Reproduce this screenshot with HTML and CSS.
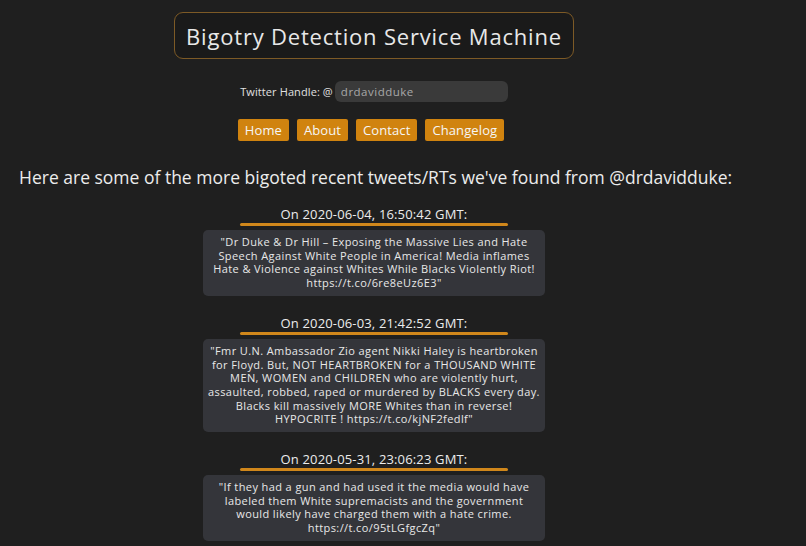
FILE: index.html
```html
<!DOCTYPE html>
<html lang="en">
<head>
<meta charset="utf-8">
<title>Bigotry Detection Service Machine</title>
<link rel="stylesheet" href="styles.css">
</head>
<body>
<div class="page">
  <header class="title-box">
    <h1 class="title">Bigotry Detection Service Machine</h1>
  </header>

  <form class="handle-form">
    <label class="handle-label" for="handle">Twitter Handle: @</label>
    <input class="handle-input" id="handle" type="text" value="drdavidduke">
  </form>

  <nav class="nav">
    <a class="nav-btn" href="#">Home</a>
    <a class="nav-btn" href="#">About</a>
    <a class="nav-btn" href="#">Contact</a>
    <a class="nav-btn" href="#">Changelog</a>
  </nav>

  <h2 class="intro">Here are some of the more bigoted recent tweets/RTs we've found from @drdavidduke:</h2>

  <section class="tweets">
    <article class="tweet">
      <div class="tweet-date">On 2020-06-04, 16:50:42 GMT:</div>
      <div class="tweet-rule"></div>
      <p class="tweet-body">"Dr Duke &amp; Dr Hill – Exposing the Massive Lies and Hate<br>Speech Against White People in America! Media inflames<br>Hate &amp; Violence against Whites While Blacks Violently Riot!<br>https://t.co/6re8eUz6E3"</p>
    </article>
    <article class="tweet">
      <div class="tweet-date">On 2020-06-03, 21:42:52 GMT:</div>
      <div class="tweet-rule"></div>
      <p class="tweet-body">"Fmr U.N. Ambassador Zio agent Nikki Haley is heartbroken<br>for Floyd. But, NOT HEARTBROKEN for a THOUSAND WHITE<br>MEN, WOMEN and CHILDREN who are violently hurt,<br>assaulted, robbed, raped or murdered by BLACKS every day.<br>Blacks kill massively MORE Whites than in reverse!<br>HYPOCRITE ! https://t.co/kjNF2fedlf"</p>
    </article>
    <article class="tweet">
      <div class="tweet-date">On 2020-05-31, 23:06:23 GMT:</div>
      <div class="tweet-rule"></div>
      <p class="tweet-body">"If they had a gun and had used it the media would have<br>labeled them White supremacists and the government<br>would likely have charged them with a hate crime.<br>https://t.co/95tLGfgcZq"</p>
    </article>
  </section>
</div>
</body>
</html>
```

FILE: styles.css
```css
html, body {
  margin: 0;
  padding: 0;
  background: #1f1f1f;
  color: #e6e6e6;
  font-family: "Open Sans", "DejaVu Sans", sans-serif;
}

.page {
  width: 748px;
  display: flex;
  flex-direction: column;
  align-items: center;
  padding-top: 12px;
}

.title-box {
  background: #1a1a1a;
  border: 1px solid #7d5a26;
  border-radius: 9px;
  padding: 0 11px;
  height: 45px;
  display: flex;
  align-items: center;
}

.title {
  margin: 0;
  font-size: 22px;
  font-weight: 400;
  color: #e8e8e8;
  letter-spacing: 0.8px;
}

.handle-form {
  margin-top: 22px;
  display: flex;
  align-items: center;
  gap: 2px;
}

.handle-label {
  font-size: 11px;
  color: #e0e0e0;
  letter-spacing: 0.1px;
}

.handle-input {
  width: 173px;
  height: 21px;
  box-sizing: border-box;
  border: none;
  border-radius: 6px;
  background: #3a3a3a;
  color: #a8a8a8;
  font-family: inherit;
  font-size: 11.5px;
  letter-spacing: 0.5px;
  padding: 0 6px;
  outline: none;
}

.nav {
  margin-top: 17px;
  margin-right: 6px;
  display: flex;
  gap: 8px;
}

.nav-btn {
  display: block;
  background: #d0830f;
  color: #f6f6f6;
  text-decoration: none;
  font-size: 13px;
  letter-spacing: 0.1px;
  line-height: 22px;
  padding: 0 7px;
  border-radius: 2px;
}

.intro {
  align-self: flex-start;
  margin: 24px 0 0 19px;
  font-size: 17.5px;
  font-weight: 400;
  color: #ececec;
  white-space: nowrap;
}

.tweets {
  margin-top: 17px;
  display: flex;
  flex-direction: column;
  align-items: center;
  gap: 19px;
}

.tweet {
  display: flex;
  flex-direction: column;
  align-items: center;
}

.tweet-date {
  font-size: 13px;
  letter-spacing: 0.15px;
  line-height: 16px;
  color: #ececec;
}

.tweet-rule {
  width: 268px;
  height: 3px;
  border-radius: 2px;
  background: #d0871b;
  margin-top: 1px;
}

.tweet-body {
  margin: 4px 0 0;
  width: 342px;
  box-sizing: border-box;
  padding: 5px 4px 6px;
  background: #34353a;
  border-radius: 5px;
  text-align: center;
  font-size: 11px;
  letter-spacing: 0.4px;
  line-height: 13.7px;
  color: #e8e8e8;
  white-space: nowrap;
}
```
